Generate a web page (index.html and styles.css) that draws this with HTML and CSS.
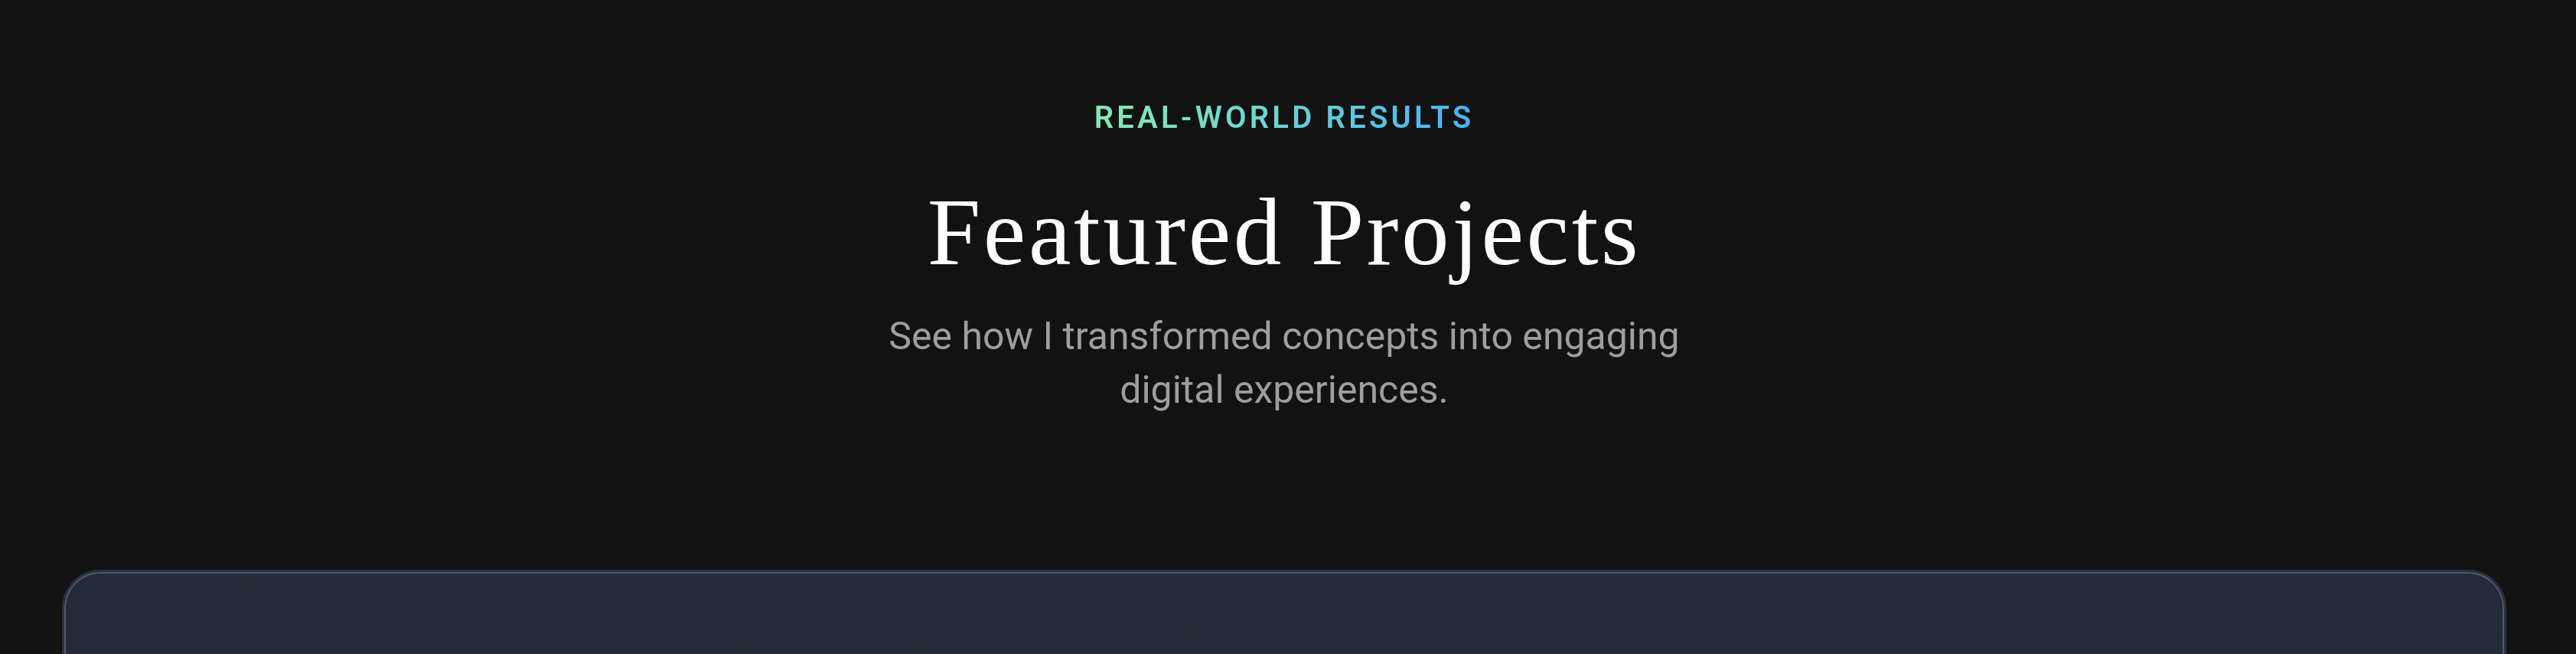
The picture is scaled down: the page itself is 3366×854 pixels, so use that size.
FILE: index.html
```html
<!DOCTYPE html>
<html lang="en">
<head>
<meta charset="utf-8">
<title>Featured Projects</title>
<link rel="stylesheet" href="styles.css">
</head>
<body>
<section class="projects">
  <header class="projects-head">
    <p class="eyebrow">REAL-WORLD RESULTS</p>
    <h2 class="title">Featured Projects</h2>
    <p class="lead">See how I transformed concepts into engaging digital experiences.</p>
  </header>
  <div class="card"></div>
</section>
</body>
</html>
```
FILE: styles.css
```css
html, body {
  margin: 0;
  padding: 0;
  background: #121212;
  height: 100%;
  overflow: hidden;
}

.projects {
  padding: 124px 91px 0 81px;
  box-sizing: border-box;
}

.projects-head {
  display: flex;
  flex-direction: column;
  align-items: center;
  text-align: center;
}

.eyebrow {
  margin: 0;
  font-family: Roboto, "Liberation Sans", sans-serif;
  font-weight: 600;
  font-size: 40px;
  line-height: 60px;
  letter-spacing: 4.2px;
  background: linear-gradient(90deg, #86e9b2 0%, #6cd6d2 45%, #48b3f4 100%);
  -webkit-background-clip: text;
  background-clip: text;
  color: transparent;
}

.title {
  margin: 51px 0 0;
  font-family: "Liberation Serif", "DejaVu Serif", serif;
  font-weight: 400;
  font-size: 125px;
  line-height: 137px;
  letter-spacing: 3.6px;
  color: #ffffff;
}

.lead {
  margin: 32px 0 0;
  max-width: 1120px;
  font-family: Roboto, "Liberation Sans", sans-serif;
  font-weight: 400;
  font-size: 50px;
  line-height: 70px;
  color: #9e9e9e;
}

.card {
  margin-top: 200px;
  height: 400px;
  border: 3px solid #283242;
  border-radius: 50px;
  box-shadow: inset 0 0 0 2px #515b6a;
  background-color: #1e2733;
  background-image: url("data:image/svg+xml,%3Csvg xmlns='http://www.w3.org/2000/svg' width='300' height='300'%3E%3Cfilter id='n'%3E%3CfeTurbulence type='fractalNoise' baseFrequency='0.9' numOctaves='2' stitchTiles='stitch'/%3E%3CfeColorMatrix values='0 0 0 0 0.6 0 0 0 0 0.7 0 0 0 0 0.85 0 0 0 0.05 0'/%3E%3C/filter%3E%3Crect width='300' height='300' filter='url(%23n)'/%3E%3C/svg%3E");
}
```
